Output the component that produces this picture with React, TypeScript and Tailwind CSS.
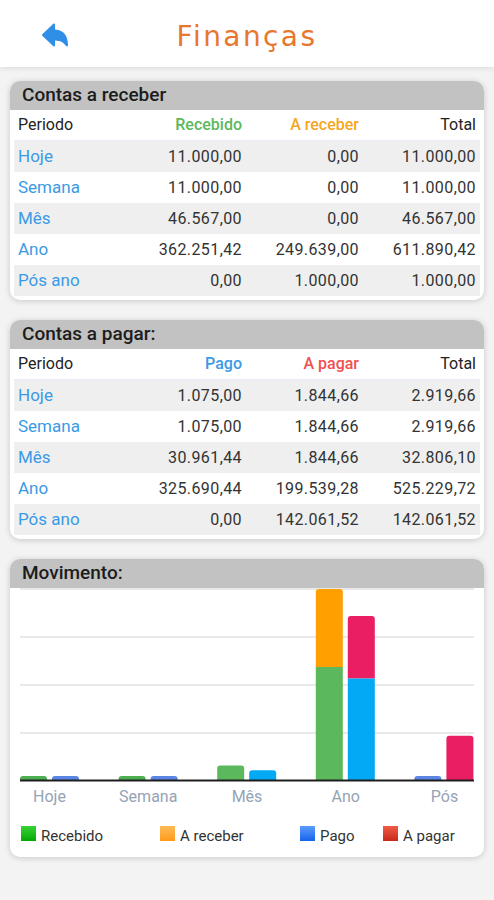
import React from 'react';
import { IoArrowUndo } from 'react-icons/io5';

type Row = { label: string; a: number; b: number };

const receber: Row[] = [
  { label: 'Hoje', a: 11000, b: 0 },
  { label: 'Semana', a: 11000, b: 0 },
  { label: 'Mês', a: 46567, b: 0 },
  { label: 'Ano', a: 362251.42, b: 249639 },
  { label: 'Pós ano', a: 0, b: 1000 },
];

const pagar: Row[] = [
  { label: 'Hoje', a: 1075, b: 1844.66 },
  { label: 'Semana', a: 1075, b: 1844.66 },
  { label: 'Mês', a: 30961.44, b: 1844.66 },
  { label: 'Ano', a: 325690.44, b: 199539.28 },
  { label: 'Pós ano', a: 0, b: 142061.52 },
];

// stacks drawn per group: [first slot, second slot], each a list of segments bottom -> top
type Seg = { v: number; color: string };
const groups: { label: string; slots: Seg[][] }[] = [
  { label: 'Hoje', slots: [[{ v: 11000, color: '#4caf50' }], [{ v: 1075, color: '#5b86e5' }]] },
  { label: 'Semana', slots: [[{ v: 11000, color: '#4caf50' }], [{ v: 1075, color: '#5b86e5' }]] },
  { label: 'Mês', slots: [[{ v: 46567, color: '#5cb85c' }], [{ v: 30961.44, color: '#03a9f4' }]] },
  {
    label: 'Ano',
    slots: [
      [
        { v: 362251.42, color: '#5cb85c' },
        { v: 249639, color: '#ffa000' },
      ],
      [
        { v: 325690.44, color: '#03a9f4' },
        { v: 199539.28, color: '#e91e63' },
      ],
    ],
  },
  { label: 'Pós', slots: [[{ v: 0, color: '#5b86e5' }], [{ v: 142061.52, color: '#e91e63' }]] },
];

function fmt(n: number) {
  return n.toLocaleString('pt-BR', { minimumFractionDigits: 2, maximumFractionDigits: 2 });
}

function CardHeader({ title }: { title: string }) {
  return (
    <div className="h-[29px] bg-[#c2c2c2] rounded-t-[10px] pl-3 flex items-center text-[19px] font-medium text-[#1c1c1c]">
      {title}
    </div>
  );
}

function FinanceTable({
  title,
  colA,
  colB,
  colAClass,
  colBClass,
  rows,
}: {
  title: string;
  colA: string;
  colB: string;
  colAClass: string;
  colBClass: string;
  rows: Row[];
}) {
  return (
    <div className="bg-white rounded-[10px] shadow-[0_1px_6px_rgba(0,0,0,0.18)]">
      <CardHeader title={title} />
      <div className="px-1 pb-1">
        <div className="grid grid-cols-[1fr_117px_117px_117px] h-[31px] items-center px-1 border-b border-[#e6edf5] text-[#222]">
          <span>Periodo</span>
          <span className={`text-right font-medium ${colAClass}`}>{colA}</span>
          <span className={`text-right font-medium ${colBClass}`}>{colB}</span>
          <span className="text-right">Total</span>
        </div>
        {rows.map((r, i) => (
          <div
            key={r.label}
            className={`grid grid-cols-[1fr_117px_117px_117px] h-[31px] items-center px-1 ${
              i % 2 === 0 ? 'bg-[#efefef]' : 'bg-white'
            }`}
          >
            <span className="text-[#3a9ae6] text-[17px]">{r.label}</span>
            <span className="text-right text-[#333] tracking-[0.4px]">{fmt(r.a)}</span>
            <span className="text-right text-[#333] tracking-[0.4px]">{fmt(r.b)}</span>
            <span className="text-right text-[#333] tracking-[0.4px]">{fmt(r.a + r.b)}</span>
          </div>
        ))}
      </div>
    </div>
  );
}

// bar with rounded top corners only
function topBar(x: number, yTop: number, w: number, h: number, r: number) {
  const rr = Math.min(r, h);
  const yb = yTop + h;
  return `M${x} ${yb} V${yTop + rr} Q${x} ${yTop} ${x + rr} ${yTop} H${x + w - rr} Q${x + w} ${yTop} ${x + w} ${yTop + rr} V${yb} Z`;
}

function Chart() {
  const base = 192;
  const max = 611890.42;
  const full = 191;
  const step = 98.6;

  return (
    <svg width="474" height="195" viewBox="0 0 474 195" className="block">
      {[1, 49, 97, 145].map((y) => (
        <line key={y} x1="10" x2="464" y1={y} y2={y} stroke="#e2e2e2" strokeWidth="1.5" />
      ))}
      {groups.map((g, i) => {
        const x0 = 10 + i * step;
        return (
          <g key={g.label}>
            {g.slots.map((segs, s) => {
              const x = x0 + s * 32;
              let y = base;
              return segs.map((seg, k) => {
                const h = Math.max(4, (seg.v / max) * full);
                y -= h;
                const last = k === segs.length - 1;
                return last ? (
                  <path key={`${s}-${k}`} d={topBar(x, y, 27, h, 3)} fill={seg.color} />
                ) : (
                  <rect key={`${s}-${k}`} x={x} y={y} width="27" height={h} fill={seg.color} />
                );
              });
            })}
          </g>
        );
      })}
      <line x1="10" x2="464" y1={base + 0.5} y2={base + 0.5} stroke="#1e1e1e" strokeWidth="2" />
    </svg>
  );
}

function Legend() {
  const items = [
    { label: 'Recebido', cls: 'bg-linear-to-b from-[#35d335] to-[#00a800]', w: 'w-[139px]' },
    { label: 'A receber', cls: 'bg-linear-to-b from-[#ffbb55] to-[#ff9a10]', w: 'w-[140px]' },
    { label: 'Pago', cls: 'bg-linear-to-b from-[#5a9cff] to-[#1463ea]', w: 'w-[83px]' },
    { label: 'A pagar', cls: 'bg-linear-to-b from-[#f05a45] to-[#c8281a]', w: 'w-auto' },
  ];
  return (
    <div className="flex pl-[11px] mt-[19px] items-center">
      {items.map((it) => (
        <div key={it.label} className={`flex items-end gap-[5px] ${it.w}`}>
          <span className={`w-[15px] h-[15px] mb-[5px] ${it.cls}`} />
          <span className="text-[15px] leading-5 text-[#333]">{it.label}</span>
        </div>
      ))}
    </div>
  );
}

function ChartLabels() {
  return (
    <div className="flex justify-between px-[10px] mt-[4px]">
      {groups.map((g) => (
        <span key={g.label} className="w-[59px] text-center text-[16px] leading-5 text-[#95a3b6]">
          {g.label}
        </span>
      ))}
    </div>
  );
}

export default function App() {
  return (
    <div
      className="w-[494px] min-h-[900px] bg-[#f3f3f3] text-[16px]"
      style={{ fontFamily: 'Roboto, "Liberation Sans", sans-serif' }}
    >
      <div className="h-[67px] bg-white shadow-[0_2px_5px_rgba(0,0,0,0.08)] flex items-center relative">
        <button type="button" className="absolute left-[39px] top-[19px] text-[#2f8fe6]">
          <IoArrowUndo size={32} />
        </button>
        <h1
          className="w-full text-center text-[28px] tracking-[2.4px] text-[#e8772e] pt-[6px]"
          style={{ fontFamily: '"DejaVu Sans", sans-serif' }}
        >
          Finanças
        </h1>
      </div>

      <div className="px-[10px] pt-[14px] flex flex-col gap-[20px]">
        <FinanceTable
          title="Contas a receber"
          colA="Recebido"
          colB="A receber"
          colAClass="text-[#5cb85c]"
          colBClass="text-[#f5a623]"
          rows={receber}
        />
        <FinanceTable
          title="Contas a pagar:"
          colA="Pago"
          colB="A pagar"
          colAClass="text-[#3a9ae6]"
          colBClass="text-[#f0504f]"
          rows={pagar}
        />
        <div className="bg-white rounded-[10px] shadow-[0_1px_6px_rgba(0,0,0,0.18)] pb-[11px]">
          <CardHeader title="Movimento:" />
          <Chart />
          <ChartLabels />
          <Legend />
        </div>
      </div>
    </div>
  );
}
